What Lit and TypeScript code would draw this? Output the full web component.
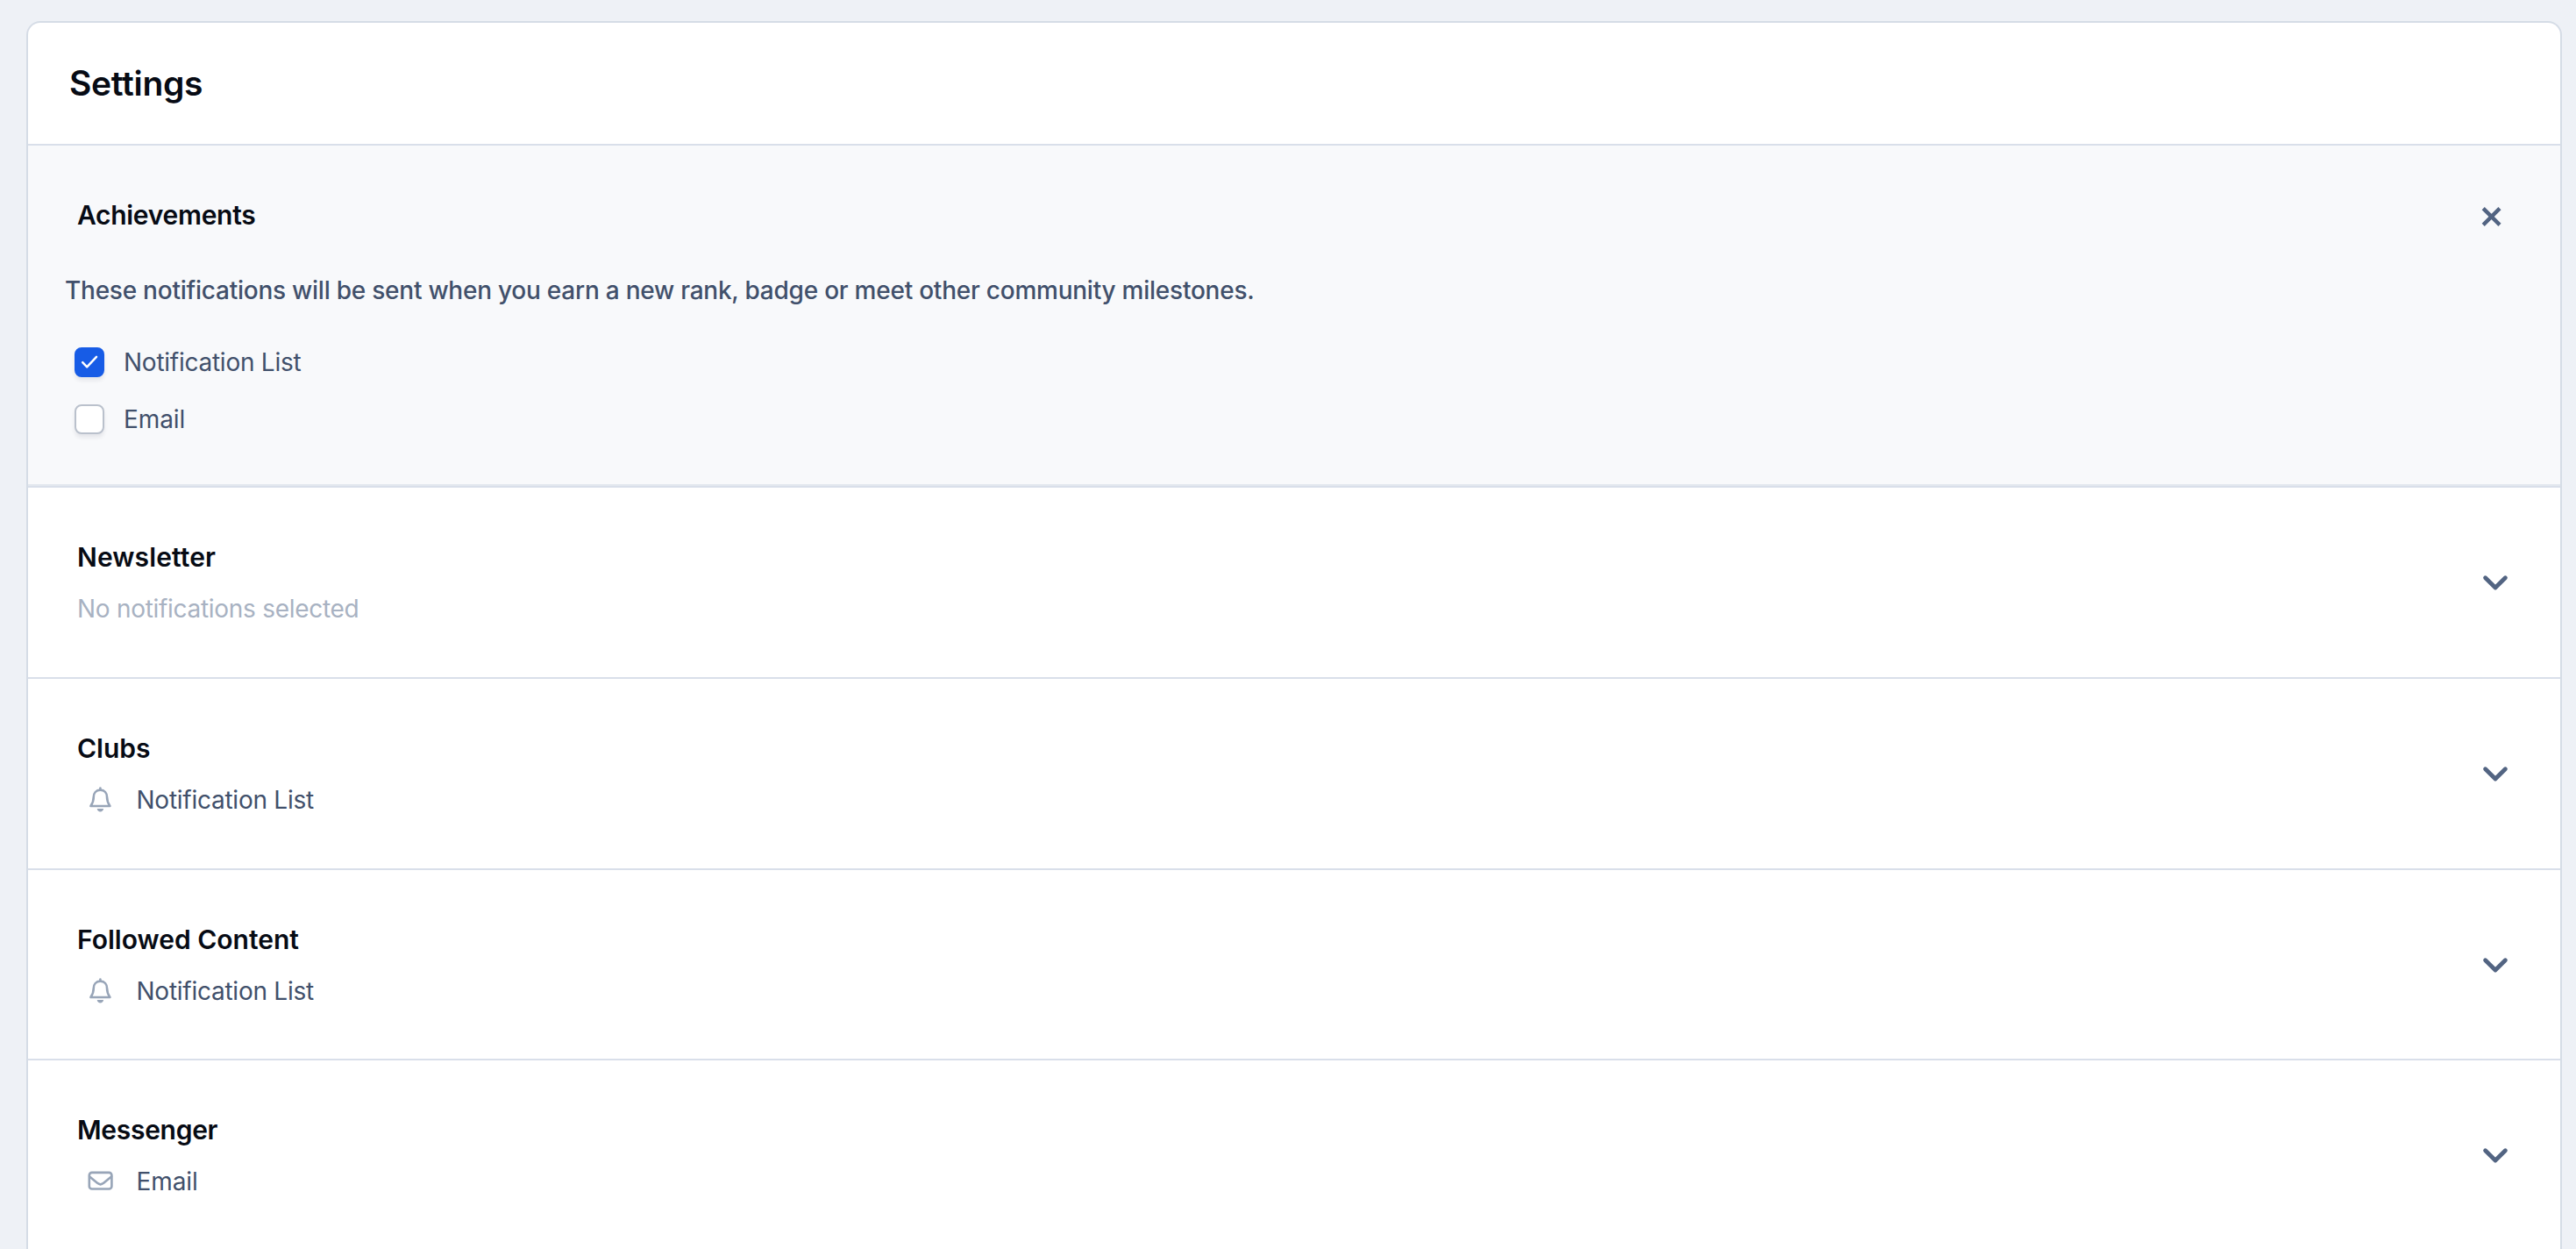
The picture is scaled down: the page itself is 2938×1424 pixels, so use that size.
import { LitElement, html, css, svg, nothing } from "lit";
import { customElement, property, state } from "lit/decorators.js";
import { classMap } from "lit/directives/class-map.js";

type Channel = "list" | "email";

interface Section {
  title: string;
  tone: string;
  channels: Channel[];
}

const LABELS: Record<Channel, string> = {
  list: "Notification List",
  email: "Email",
};

const SECTIONS: Section[] = [
  { title: "Newsletter", tone: "loose", channels: [] },
  { title: "Clubs", tone: "normal", channels: ["list"] },
  { title: "Followed Content", tone: "normal short", channels: ["list"] },
  { title: "Messenger", tone: "tight", channels: ["email"] },
];

const GLYPHS = {
  list: svg`
    <path d="M14.4 1.6v2.2" />
    <path d="M14.4 3.6c-4.9 0-7.6 3.7-7.6 8 0 5.4-1.3 7.5-3.4 10.4h22c-2.1-2.9-3.4-5-3.4-10.4 0-4.3-2.7-8-7.6-8z" />
    <path class="solid" d="M10.7 24.9h7.4c-.3 2.1-1.8 3.5-3.7 3.5s-3.4-1.4-3.7-3.5z" />`,
  email: svg`
    <rect x="1.8" y="4.9" width="25.6" height="18.6" rx="3" />
    <path d="M2.2 9.6l8.8 7.2c2.3 1.9 4.9 1.9 7.2 0l8.8-7.2" />`,
};

@customElement("channel-icon")
class ChannelIcon extends LitElement {
  @property() name: Channel = "list";

  static styles = css`
    :host {
      display: block;
      width: 30px;
      height: 30px;
      color: #98a5b8;
    }
    .glyph {
      display: block;
      fill: none;
      stroke: currentColor;
      stroke-width: 2.6;
      stroke-linecap: round;
      stroke-linejoin: round;
    }
    .solid {
      fill: currentColor;
      stroke: none;
    }
  `;

  render() {
    return html`<svg class="glyph" width="30" height="30" viewBox="0 0 30 30">${GLYPHS[this.name]}</svg>`;
  }
}

@customElement("check-option")
class CheckOption extends LitElement {
  @property() label = "";
  @property({ type: Boolean }) checked = false;

  static styles = css`
    :host {
      display: block;
    }
    .option {
      display: flex;
      align-items: center;
      gap: 22px;
      height: 34px;
      cursor: pointer;
    }
    .box {
      box-sizing: border-box;
      width: 34px;
      height: 34px;
      border: 2px solid #bac1cc;
      border-radius: 8px;
      background: #fff;
      box-shadow: 0 4px 4px rgba(20, 30, 50, 0.08);
    }
    .box.on {
      border-color: #175ce6;
      background: #175ce6;
    }
    .tick {
      display: block;
      width: 30px;
      height: 30px;
      fill: none;
      stroke: #fff;
      stroke-width: 2.5;
      stroke-linecap: round;
      stroke-linejoin: round;
    }
    .label {
      letter-spacing: -0.25px;
    }
    .label.brief {
      letter-spacing: -0.1px;
    }
  `;

  render() {
    return html`
      <div class="option" role="checkbox" aria-checked=${this.checked} @click=${() => (this.checked = !this.checked)}>
        <span class=${classMap({ box: true, on: this.checked })}>
          ${this.checked ? html`<svg class="tick" viewBox="0 0 30 30"><path d="M7.2 15.1l5 5.2L23 8.8" /></svg>` : nothing}
        </span>
        <span class=${classMap({ label: true, brief: this.label.length < 8 })}>${this.label}</span>
      </div>
    `;
  }
}

@customElement("app-root")
class AppRoot extends LitElement {
  @state() private sections = SECTIONS;

  static styles = css`
    :host {
      display: block;
      box-sizing: border-box;
      height: 100vh;
      overflow: hidden;
      padding: 24px 16px 0 30px;
      background: #eef1f6;
      color: #41506b;
      font: 400 28px/40px Inter, "Liberation Sans", sans-serif;
    }
    .card {
      border: 2px solid #d5dce6;
      border-bottom: 0;
      border-radius: 16px 16px 0 0;
      background: #fff;
      overflow: hidden;
    }
    .header {
      display: flex;
      align-items: center;
      height: 138px;
      padding-left: 47px;
      border-bottom: 2px solid #d9dfea;
    }
    .heading {
      margin: 0;
      color: #070b14;
      font-size: 39px;
      font-weight: 600;
      line-height: 48px;
      letter-spacing: -0.3px;
    }
    .title {
      margin: 0;
      color: #070b14;
      font-size: 30px;
      font-weight: 600;
      line-height: 36px;
    }
    .tight {
      letter-spacing: -0.3px;
    }
    .loose {
      letter-spacing: 0.12px;
    }
    .open {
      padding: 61px 66px 59px 42px;
      background: #f8f9fb;
      border-bottom: 2px solid #d9dfea;
      box-shadow: inset 0 -2px 0 #e3e8ee;
    }
    .bar {
      display: flex;
      justify-content: space-between;
      align-items: flex-start;
      height: 36px;
      padding-left: 14px;
    }
    .intro {
      margin: 48px 0 45px;
      font-weight: 500;
      letter-spacing: -0.24px;
    }
    .options {
      display: flex;
      flex-direction: column;
      gap: 31px;
      padding-left: 11px;
    }
    .row {
      display: flex;
      justify-content: space-between;
      align-items: center;
      box-sizing: border-box;
      height: 218px;
      padding: 0 58px 0 56px;
      border-bottom: 2px solid #d9dfea;
    }
    .row.short {
      height: 217px;
    }
    .summary {
      display: flex;
      flex-direction: column;
      gap: 21px;
      align-self: flex-start;
      padding-top: 61px;
    }
    .channel {
      display: flex;
      align-items: center;
      gap: 25.5px;
      padding-left: 12px;
      letter-spacing: -0.25px;
    }
    .channel.email {
      letter-spacing: -0.1px;
    }
    .empty {
      color: #a8b2c2;
      letter-spacing: -0.29px;
    }
    .control {
      display: block;
      fill: none;
      stroke: #526482;
      stroke-linecap: round;
      stroke-linejoin: round;
    }
    .close {
      margin-top: 5px;
      stroke-width: 4.4;
      stroke-linecap: butt;
    }
    .chevron {
      stroke-width: 4.8;
    }
  `;

  private renderRow(section: Section) {
    return html`
      <section class="row ${section.tone.includes("short") ? "short" : ""}">
        <div class="summary">
          <h2 class="title ${section.tone.split(" ")[0]}">${section.title}</h2>
          ${section.channels.length
            ? section.channels.map(
                (c) => html`<div class="channel ${c}"><channel-icon name=${c}></channel-icon><span>${LABELS[c]}</span></div>`
              )
            : html`<div class="empty">No notifications selected</div>`}
        </div>
        <svg class="control chevron" width="32" height="32" viewBox="0 0 32 32"><path d="M4.6 10.7L16 22L27.4 10.7" /></svg>
      </section>
    `;
  }

  render() {
    return html`
      <main class="card">
        <header class="header"><h1 class="heading">Settings</h1></header>
        <section class="open">
          <div class="bar">
            <h2 class="title tight">Achievements</h2>
            <svg class="control close" width="24" height="32" viewBox="0 0 24 32"><path d="M2.2 5.6L21 24.4M21 5.6L2.2 24.4" /></svg>
          </div>
          <p class="intro">These notifications will be sent when you earn a new rank, badge or meet other community milestones.</p>
          <div class="options">
            <check-option label="Notification List" checked></check-option>
            <check-option label="Email"></check-option>
          </div>
        </section>
        ${this.sections.map((s) => this.renderRow(s))}
      </main>
    `;
  }
}
